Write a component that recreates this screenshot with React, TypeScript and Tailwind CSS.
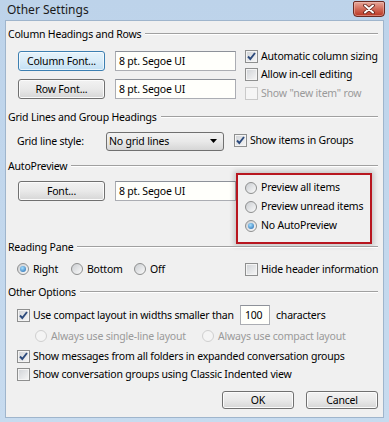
import React from 'react';

// Vista-style "Other Settings" dialog

const Check: React.FC<{ checked?: boolean; disabled?: boolean }> = ({ checked, disabled }) => (
  <span
    className={`w-[13px] h-[13px] shrink-0 border flex items-center justify-center ${
      disabled
        ? 'border-[#c9c9c9] bg-[#f5f5f5]'
        : 'border-[#8e8f8f] bg-linear-to-br from-[#cfd2d6] to-[#f7f7f7] shadow-[inset_0_0_0_1px_#f4f4f4]'
    }`}
  >
    {checked && (
      <svg width="11" height="11" viewBox="0 0 11 11">
        <path d="M2 5.5 L4.3 8 L9 2" fill="none" stroke="#2c4a7c" strokeWidth="1.9" />
      </svg>
    )}
  </span>
);

const Radio: React.FC<{ checked?: boolean; disabled?: boolean }> = ({ checked, disabled }) => (
  <span
    className={`w-[12px] h-[12px] shrink-0 rounded-full border flex items-center justify-center ${
      disabled
        ? 'border-[#cfcfcf] bg-[#f4f4f4]'
        : 'border-[#8e8f8f] bg-linear-to-br from-[#cacdd1] to-[#fbfbfb]'
    }`}
  >
    {checked && (
      <span className="w-[6px] h-[6px] rounded-full bg-[radial-gradient(circle_at_40%_35%,#a6e0ff,#1d64ad)]" />
    )}
  </span>
);

const Btn: React.FC<{ label: string; focused?: boolean; w: string }> = ({ label, focused, w }) => (
  <div
    className={`${w} h-full flex items-center justify-center rounded-[3px] border ${
      focused
        ? 'border-[#3c7fb1] bg-linear-to-b from-[#e5f3fb] via-[#d9ecf8] to-[#c2e0f4] shadow-[inset_0_0_0_1px_#ffffffa0]'
        : 'border-[#707070] bg-linear-to-b from-[#f2f2f2] via-[#e9e9e9] to-[#d6d6d6] shadow-[inset_0_0_0_1px_#fbfbfb]'
    }`}
  >
    {label}
  </div>
);

const TextBox: React.FC<{ value: string; w: string }> = ({ value, w }) => (
  <div className={`${w} h-full flex items-center pl-[3px] border border-[#abadb3] border-t-[#8d9199] bg-[#fffffb]`}>
    {value}
  </div>
);

const Heading: React.FC<{ title: string }> = ({ title }) => (
  <div className="h-[16px] flex items-center pl-[2px] pr-[5px]">
    <span>{title}</span>
    <div className="flex-1 ml-[4px] h-[2px] border-t border-[#a0a0a0] border-b border-b-white" />
  </div>
);

const Option: React.FC<{ children: React.ReactNode; label: string; disabled?: boolean; className?: string }> = ({
  children,
  label,
  disabled,
  className = '',
}) => (
  <div className={`flex items-center gap-[3px] ${className}`}>
    {children}
    <span className={disabled ? 'text-[#9a9a9a]' : ''}>{label}</span>
  </div>
);

export default function App() {
  return (
    <div className="w-[389px] h-[422px] flex flex-col bg-linear-to-b from-[#bdd3ea] to-[#c7dbef] font-['Noto_Sans',sans-serif] text-[10.5px] tracking-[-0.2px] text-black leading-none whitespace-nowrap">
      {/* title bar */}
      <div className="h-[20px] shrink-0 flex items-start justify-between pl-[7px] pr-[4px]">
        <span className="text-[12px] tracking-normal mt-[4px] text-[#1a1a1a]">Other Settings</span>
        <div className="mt-[1px] w-[32px] h-[16px] rounded-b-[4px] rounded-t-[2px] border border-[#6b2a22] bg-linear-to-b from-[#e6a89c] via-[#d26a58] to-[#b8321f] flex items-center justify-center shadow-[inset_0_0_0_1px_#f1c4ba80]">
          <svg width="12" height="10" viewBox="0 0 12 10">
            <path d="M2 1.5 L10 8.5 M10 1.5 L2 8.5" stroke="#5a1f18" strokeWidth="3.6" strokeLinecap="round" />
            <path d="M2 1.5 L10 8.5 M10 1.5 L2 8.5" stroke="#ffffff" strokeWidth="2" strokeLinecap="round" />
          </svg>
        </div>
      </div>

      {/* client area */}
      <div className="flex-1 mx-[5px] mb-[4px] bg-[#f0f0f0] border border-[#9fb5cc] flex flex-col">
        <div className="mt-[5px]">
          <Heading title="Column Headings and Rows" />
        </div>
        {/* section 1 */}
        <div className="h-[67px] flex">
          <div className="flex flex-col pl-[12px] pt-[9px] gap-[8px]">
            <div className="h-[20px] flex gap-[10px]">
              <Btn label="Column Font..." focused w="w-[87px]" />
              <TextBox value="8 pt. Segoe UI" w="w-[121px]" />
            </div>
            <div className="h-[20px] flex gap-[10px]">
              <Btn label="Row Font..." w="w-[87px]" />
              <TextBox value="8 pt. Segoe UI" w="w-[121px]" />
            </div>
          </div>
          <div className="flex flex-col pl-[9px] pt-[5px]">
            <Option label="Automatic column sizing" className="h-[18px]">
              <Check checked />
            </Option>
            <Option label="Allow in-cell editing" className="h-[18px]">
              <Check />
            </Option>
            <Option label={'Show "new item" row'} disabled className="h-[18px] mt-[1px]">
              <Check disabled />
            </Option>
          </div>
        </div>

        <Heading title="Grid Lines and Group Headings" />
        {/* section 2 */}
        <div className="h-[33px] flex items-start pt-[6px]">
          <div className="h-[20px] flex items-center">
            <span className="w-[100px] pl-[11px]">Grid line style:</span>
            <div className="w-[118px] h-[19px] flex items-center justify-between pl-[2px] pr-[6px] rounded-[3px] border border-[#707070] bg-linear-to-b from-[#f2f2f2] via-[#e9e9e9] to-[#d6d6d6]">
              <span>No grid lines</span>
              <svg width="7" height="4" viewBox="0 0 7 4">
                <path d="M0 0 H7 L3.5 4 Z" fill="#000" />
              </svg>
            </div>
            <Option label="Show items in Groups" className="ml-[10px] h-[18px] -mt-[2px]">
              <Check checked />
            </Option>
          </div>
        </div>

        <Heading title="AutoPreview" />
        {/* section 3 */}
        <div className="h-[65px] flex items-start">
          <div className="h-[20px] mt-[7px] ml-[12px] flex gap-[10px]">
            <Btn label="Font..." w="w-[87px]" />
            <TextBox value="8 pt. Segoe UI" w="w-[121px]" />
          </div>
          <div className="w-[136px] h-[71px] shrink-0 -mt-[1px] border-2 border-[#b8161f] shadow-[0_0_5px_2px_rgba(0,0,0,0.18)] flex flex-col pt-[3px] pl-[7px]">
            <Option label="Preview all items" className="h-[19px] gap-[4px]">
              <Radio />
            </Option>
            <Option label="Preview unread items" className="h-[19px] gap-[4px]">
              <Radio />
            </Option>
            <Option label="No AutoPreview" className="h-[19px] gap-[4px]">
              <Radio checked />
            </Option>
          </div>
        </div>

        <Heading title="Reading Pane" />
        {/* section 4 */}
        <div className="h-[29px] pt-[5px]">
          <div className="h-[18px] flex items-center pl-[11px]">
            <Option label="Right" className="w-[54px] gap-[4px]">
              <Radio checked />
            </Option>
            <Option label="Bottom" className="w-[63px] gap-[4px]">
              <Radio />
            </Option>
            <Option label="Off" className="w-[111px] gap-[4px]">
              <Radio />
            </Option>
            <Option label="Hide header information">
              <Check />
            </Option>
          </div>
        </div>

        <Heading title="Other Options" />
        {/* section 5 */}
        <div className="flex flex-col pl-[11px] pt-[5px]">
          <div className="h-[20px] flex items-center">
            <Option label="Use compact layout in widths smaller than" className="w-[223px]">
              <Check checked />
            </Option>
            <div className="w-[30px] h-[20px] flex items-center pl-[4px] border border-[#abadb3] border-t-[#8d9199] bg-[#fffffb]">
              100
            </div>
            <span className="ml-[6px]">characters</span>
          </div>
          <div className="h-[18px] mt-[2px] flex items-center pl-[18px]">
            <Option label="Always use single-line layout" disabled className="w-[167px] gap-[4px]">
              <Radio disabled />
            </Option>
            <Option label="Always use compact layout" disabled className="gap-[4px]">
              <Radio disabled />
            </Option>
          </div>
          <Option label="Show messages from all folders in expanded conversation groups" className="h-[18px] mt-[2px]">
            <Check checked />
          </Option>
          <Option label="Show conversation groups using Classic Indented view" className="h-[18px]">
            <Check />
          </Option>
        </div>

        {/* dialog buttons */}
        <div className="h-[18px] mt-[8px] flex justify-end gap-[12px] pr-[5px]">
          <Btn label="OK" w="w-[72px]" />
          <Btn label="Cancel" w="w-[72px]" />
        </div>
      </div>
    </div>
  );
}
